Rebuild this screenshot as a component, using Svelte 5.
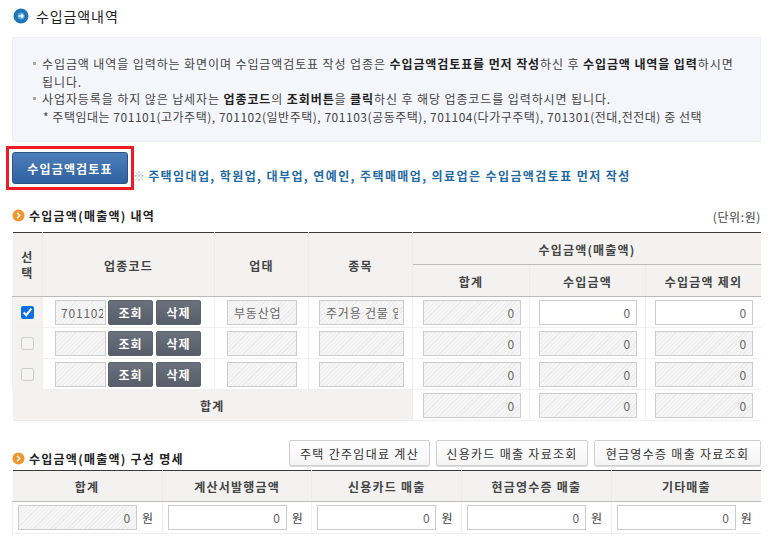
<script lang="ts">
	const notice = '701101(고가주택), 701102(일반주택), 701103(공동주택), 701104(다가구주택), 701301(전대,전전대) 중 선택';

	const rows = [
		{ checked: true, code: '701102', biz: '부동산업', item: '주거용 건물 임대업', editable: true },
		{ checked: false, code: '', biz: '', item: '', editable: false },
		{ checked: false, code: '', biz: '', item: '', editable: false }
	];

	const breakdown = [
		{ label: '합계', editable: false },
		{ label: '계산서발행금액', editable: true },
		{ label: '신용카드 매출', editable: true },
		{ label: '현금영수증 매출', editable: true },
		{ label: '기타매출', editable: true }
	];
</script>

<div class="page">
	<h1 class="title">
		<svg class="title-icon" width="16" height="16" viewBox="0 0 16 16">
			<circle cx="8" cy="8" r="7.5" fill="#1c76b8" />
			<circle cx="8" cy="8" r="3.6" fill="#5aa4d8" />
			<path d="M5.5 8h4.6M8.2 6l2.1 2-2.1 2" fill="none" stroke="#eaf4fb" stroke-width="1.3" />
		</svg>
		수입금액내역
	</h1>

	<div class="info">
		<p class="bullet">수입금액 내역을 입력하는 화면이며 수입금액검토표 작성 업종은 <b>수입금액검토표를 먼저 작성</b>하신 후 <b>수입금액 내역을 입력</b>하시면 됩니다.</p>
		<p class="bullet">사업자등록을 하지 않은 납세자는 <b>업종코드</b>의 <b>조회버튼</b>을 <b>클릭</b>하신 후 해당 업종코드를 입력하시면 됩니다.</p>
		<p class="sub">* 주택임대는 {notice}</p>
	</div>

	<div class="review">
		<div class="review-mark"><button class="review-btn">수입금액검토표</button></div>
		<span class="review-note"><i>※</i> 주택임대업, 학원업, 대부업, 연예인, 주택매매업, 의료업은 수입금액검토표 먼저 작성</span>
	</div>

	<div class="section-head first">
		<h2>
			<svg width="13" height="13" viewBox="0 0 13 13">
				<circle cx="6.5" cy="6.5" r="6" fill="#f0962a" />
				<path d="M5 3.8l2.7 2.7L5 9.2" fill="none" stroke="#fff" stroke-width="1.5" />
			</svg>
			수입금액(매출액) 내역
		</h2>
		<span class="unit">(단위:원)</span>
	</div>

	<table class="grid income">
		<colgroup>
			<col style="width:30px" /><col style="width:172px" /><col style="width:94px" /><col style="width:104px" />
			<col style="width:117px" /><col style="width:116px" /><col />
		</colgroup>
		<thead>
			<tr>
				<th rowspan="2" class="narrow">선<br />택</th>
				<th rowspan="2">업종코드</th>
				<th rowspan="2">업태</th>
				<th rowspan="2">종목</th>
				<th colspan="3">수입금액(매출액)</th>
			</tr>
			<tr>
				<th>합계</th>
				<th>수입금액</th>
				<th>수입금액 제외</th>
			</tr>
		</thead>
		<tbody>
			{#each rows as row}
				<tr>
					<td class="check"><input type="checkbox" checked={row.checked} disabled={!row.checked} /></td>
					<td>
						<div class="code-cell">
							<input class="field locked code" readonly value={row.code} />
							<button class="dark">조회</button>
							<button class="dark">삭제</button>
						</div>
					</td>
					<td><input class="field locked biz" readonly value={row.biz} /></td>
					<td><input class="field locked item" readonly value={row.item} /></td>
					<td><input class="field locked num" readonly value="0" /></td>
					<td><input class="field num" class:locked={!row.editable} readonly value="0" /></td>
					<td><input class="field num" class:locked={!row.editable} readonly value="0" /></td>
				</tr>
			{/each}
			<tr class="total">
				<th colspan="4">합계</th>
				<td><input class="field locked num" readonly value="0" /></td>
				<td><input class="field locked num" readonly value="0" /></td>
				<td><input class="field locked num" readonly value="0" /></td>
			</tr>
		</tbody>
	</table>

	<div class="section-head second">
		<h2>
			<svg width="13" height="13" viewBox="0 0 13 13">
				<circle cx="6.5" cy="6.5" r="6" fill="#f0962a" />
				<path d="M5 3.8l2.7 2.7L5 9.2" fill="none" stroke="#fff" stroke-width="1.5" />
			</svg>
			수입금액(매출액) 구성 명세
		</h2>
		<div class="actions">
			<button class="light wide-a">주택 간주임대료 계산</button>
			<button class="light wide-b">신용카드 매출 자료조회</button>
			<button class="light wide-c">현금영수증 매출 자료조회</button>
		</div>
	</div>

	<table class="grid breakdown">
		<thead>
			<tr>
				{#each breakdown as col}
					<th>{col.label}</th>
				{/each}
			</tr>
		</thead>
		<tbody>
			<tr>
				{#each breakdown as col}
					<td>
						<div class="won">
							<input class="field num" class:locked={!col.editable} readonly value="0" />
							<span>원</span>
						</div>
					</td>
				{/each}
			</tr>
		</tbody>
	</table>
</div>

<style>
	:global(body) {
		margin: 0;
		background: #fff;
	}

	.page {
		width: 749px;
		padding: 0 12px;
		overflow: hidden;
		height: 543px;
		font-family: 'Noto Sans CJK KR', 'Noto Sans', sans-serif;
		font-size: 12px;
		color: #444;
	}

	.title {
		display: flex;
		align-items: center;
		gap: 7px;
		height: 37px;
		margin: 0 0 0 1px;
		padding-bottom: 5px;
		box-sizing: border-box;
		font-size: 14px;
		font-weight: 400;
		letter-spacing: 0.9px;
		color: #222;
	}

	.info {
		box-sizing: border-box;
		height: 105px;
		padding: 17px 20px 0 29px;
		background: #f4f6fb;
		border: 1px solid #eef0f6;
		line-height: 17.5px;
		color: #444;
	}

	.info p {
		margin: 0;
		position: relative;
	}

	.info b {
		color: #222;
	}

	.bullet {
		letter-spacing: 0.9px;
	}

	.bullet::before {
		content: '';
		position: absolute;
		left: -9px;
		top: 7px;
		width: 3px;
		height: 3px;
		background: #aaa;
	}

	.sub {
		padding-left: 1px;
		letter-spacing: 0.52px;
	}

	.review {
		display: flex;
		align-items: center;
		height: 32px;
		margin-top: 10px;
	}

	.review-mark {
		display: flex;
		margin: -6px 0 -6px -6px;
		padding: 3px;
		border: 3px solid #ed1c24;
	}

	.review-btn {
		width: 116px;
		height: 32px;
		padding: 0;
		border: 1px solid #2b5288;
		border-radius: 3px;
		background: linear-gradient(#4d7fbb, #30609f);
		color: #fff;
		font: inherit;
		font-weight: 700;
		font-size: 12px;
		letter-spacing: 1.2px;
	}

	.review-note {
		margin: 14px 0 0 -1px;
		color: #1f6aa5;
		font-weight: 700;
		font-size: 12px;
		letter-spacing: 1.4px;
	}

	.review-note i {
		font-style: normal;
		font-weight: 400;
		color: #a9bccb;
		letter-spacing: -1px;
	}

	.section-head {
		display: flex;
		justify-content: space-between;
	}

	.section-head h2 {
		display: flex;
		align-items: center;
		gap: 4px;
		margin: 0;
		font-size: 12px;
		font-weight: 700;
		color: #222;
		letter-spacing: 1.25px;
	}

	.section-head.first {
		align-items: center;
		height: 18px;
		margin: 22px 0 0;
	}

	.unit {
		margin-top: 3px;
		color: #444;
		letter-spacing: 0.6px;
	}

	.section-head.second {
		align-items: flex-end;
		height: 26px;
		margin-top: 19px;
		margin-bottom: 4px;
	}

	.section-head.second h2 {
		margin-bottom: -1px;
	}

	.actions {
		display: flex;
		gap: 6px;
	}

	.light {
		height: 26px;
		padding: 0;
		background: linear-gradient(#fff, #f4f4f4);
		border: 1px solid #cfcfcf;
		border-radius: 2px;
		font: inherit;
		font-size: 12px;
		color: #333;
		letter-spacing: 1.3px;
		box-shadow: 0 1px 0 #ddd;
	}

	.wide-a {
		width: 141px;
	}

	.wide-b {
		width: 152px;
	}

	.wide-c {
		width: 167px;
	}

	.grid {
		width: 749px;
		border-collapse: collapse;
		table-layout: fixed;
		border-top: 1px solid #3a3a3a;
	}

	.income {
		margin-top: 8px;
	}

	.grid th {
		padding: 1px 0 0;
		background: #f3f2f1;
		border: 1px solid #ececec;
		border-top: 0;
		border-bottom: 1px solid #bbb;
		font-size: 12px;
		font-weight: 700;
		color: #444;
		letter-spacing: 1.2px;
	}

	.grid th:first-child {
		border-left: 0;
	}

	.grid th:last-child {
		border-right: 0;
	}

	.income thead tr {
		height: 32px;
	}

	.grid th.narrow {
		line-height: 16px;
	}

	.grid td {
		padding: 0;
		height: 30px;
		text-align: center;
		border: 1px solid #f0f0f0;
		border-top: 0;
	}

	.grid td:last-child {
		border-right: 0;
	}

	.check {
		background: #f3f2f1;
	}

	.check input {
		display: block;
		width: 13px;
		height: 13px;
		margin: 0 auto;
		accent-color: #0b6fe8;
	}

	.grid .total th {
		height: 30px;
		padding: 0;
		border-bottom: 1px solid #ececec;
	}

	.code-cell {
		display: flex;
		gap: 2px;
		padding-left: 12px;
	}

	.field {
		display: block;
		box-sizing: border-box;
		height: 25px;
		margin: 0 auto;
		padding: 0 5px 0 6px;
		background: #fff;
		border: 1px solid #ccc;
		font: inherit;
		font-size: 12px;
		letter-spacing: 0.8px;
		color: #666;
		outline: none;
	}

	.locked {
		background: repeating-linear-gradient(135deg, #f6f6f6 0 2px, #ececec 2px 3px);
	}

	.code {
		width: 51px;
		margin: 0;
		padding: 0 2px 0 5px;
	}

	.biz {
		width: 70px;
		margin-left: 12px;
	}

	.item {
		width: 85px;
		margin-left: 10px;
	}

	.num {
		width: 98px;
		text-align: right;
		margin: 0 8px 0 auto;
	}

	.dark {
		width: 45px;
		height: 25px;
		padding: 0;
		background: linear-gradient(#6a707c, #575d69);
		border: 1px solid #5d636e;
		border-radius: 2px;
		color: #fff;
		font: inherit;
		font-size: 12px;
		font-weight: 700;
		letter-spacing: 1px;
	}

	.dark + .dark {
		margin-left: 1px;
	}

	.breakdown thead tr {
		height: 31px;
	}

	.breakdown td {
		height: 31px;
	}

	.won {
		display: flex;
		align-items: center;
		gap: 5px;
		padding-left: 5px;
	}

	.won .field {
		width: 119px;
		margin: 0;
	}
</style>
